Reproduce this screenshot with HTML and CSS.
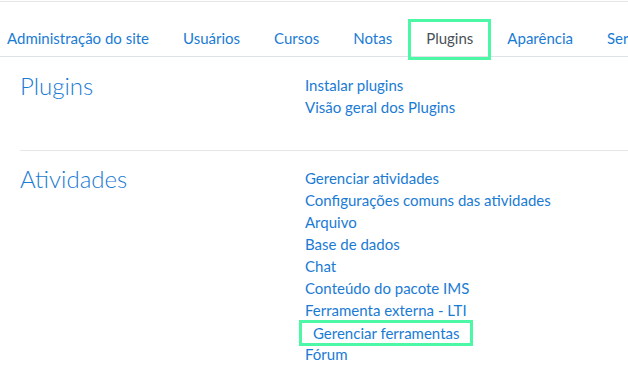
FILE: index.html
```html
<!DOCTYPE html>
<html lang="pt-BR">
<head>
    <meta charset="UTF-8">
    <title>Administração do site: Plugins</title>
    <link rel="stylesheet" href="styles.css">
</head>
<body>
    <div class="top-line"></div>

    <!-- Abas da administração -->
    <nav class="tabs">
        <a href="#">Administração do site</a>
        <a href="#">Usuários</a>
        <a href="#">Cursos</a>
        <a href="#">Notas</a>
        <a href="#" class="active">Plugins</a>
        <a href="#">Aparência</a>
        <a href="#">Servidor</a>
    </nav>

    <main class="admin">
        <section class="group">
            <h3>Plugins</h3>
            <ul class="links">
                <li><a href="#">Instalar plugins</a></li>
                <li><a href="#">Visão geral dos Plugins</a></li>
            </ul>
        </section>

        <section class="group">
            <h3>Atividades</h3>
            <ul class="links">
                <li><a href="#">Gerenciar atividades</a></li>
                <li><a href="#">Configurações comuns das atividades</a></li>
                <li><a href="#">Arquivo</a></li>
                <li><a href="#">Base de dados</a></li>
                <li><a href="#">Chat</a></li>
                <li><a href="#">Conteúdo do pacote IMS</a></li>
                <li><a href="#">Ferramenta externa - LTI</a></li>
                <li class="marked"><a href="#">Gerenciar ferramentas</a></li>
                <li><a href="#">Fórum</a></li>
            </ul>
        </section>
    </main>
</body>
</html>
```

FILE: styles.css
```css
body {
    margin: 0;
    font-family: Lato, "Open Sans", sans-serif;
    font-size: 15px;
    color: #373a3c;
    background: #fff;
    overflow: hidden;
}

a {
    color: #1a7bd4;
    text-decoration: none;
}

.top-line {
    margin-top: 1px;
    height: 1px;
    background: #e6e6e6;
}

.tabs {
    display: flex;
    align-items: flex-start;
    padding: 18px 0 0 7px;
    border-bottom: 1px solid #dee2e6;
    white-space: nowrap;
}

.tabs a {
    padding: 8px 0;
    margin-right: 34px;
    line-height: 20px;
}

.tabs a.active {
    color: #495057;
    padding: 8px 17px 11px;
    margin: 0 17px -3px -17px;
    outline: 3px solid #4cf7a6;
    outline-offset: -2px;
}

.group {
    display: grid;
    grid-template-columns: 285px 1fr;
    margin-left: 20px;
    padding: 17px 0 32px;
}

.group + .group {
    border-top: 1px solid #e6e6e6;
    padding-top: 16px;
}

.group h3 {
    margin: -2px 0 0;
    font-size: 24px;
    font-weight: 300;
    line-height: 28px;
    color: #1a7bd4;
}

.links {
    list-style: none;
    margin: 0;
    padding: 0;
    line-height: 22px;
}

.links .marked a {
    display: inline-block;
    padding: 0 11px;
    margin-left: -3px;
    line-height: 20px;
    vertical-align: -1px;
    outline: 3px solid #4cf7a6;
}
```
